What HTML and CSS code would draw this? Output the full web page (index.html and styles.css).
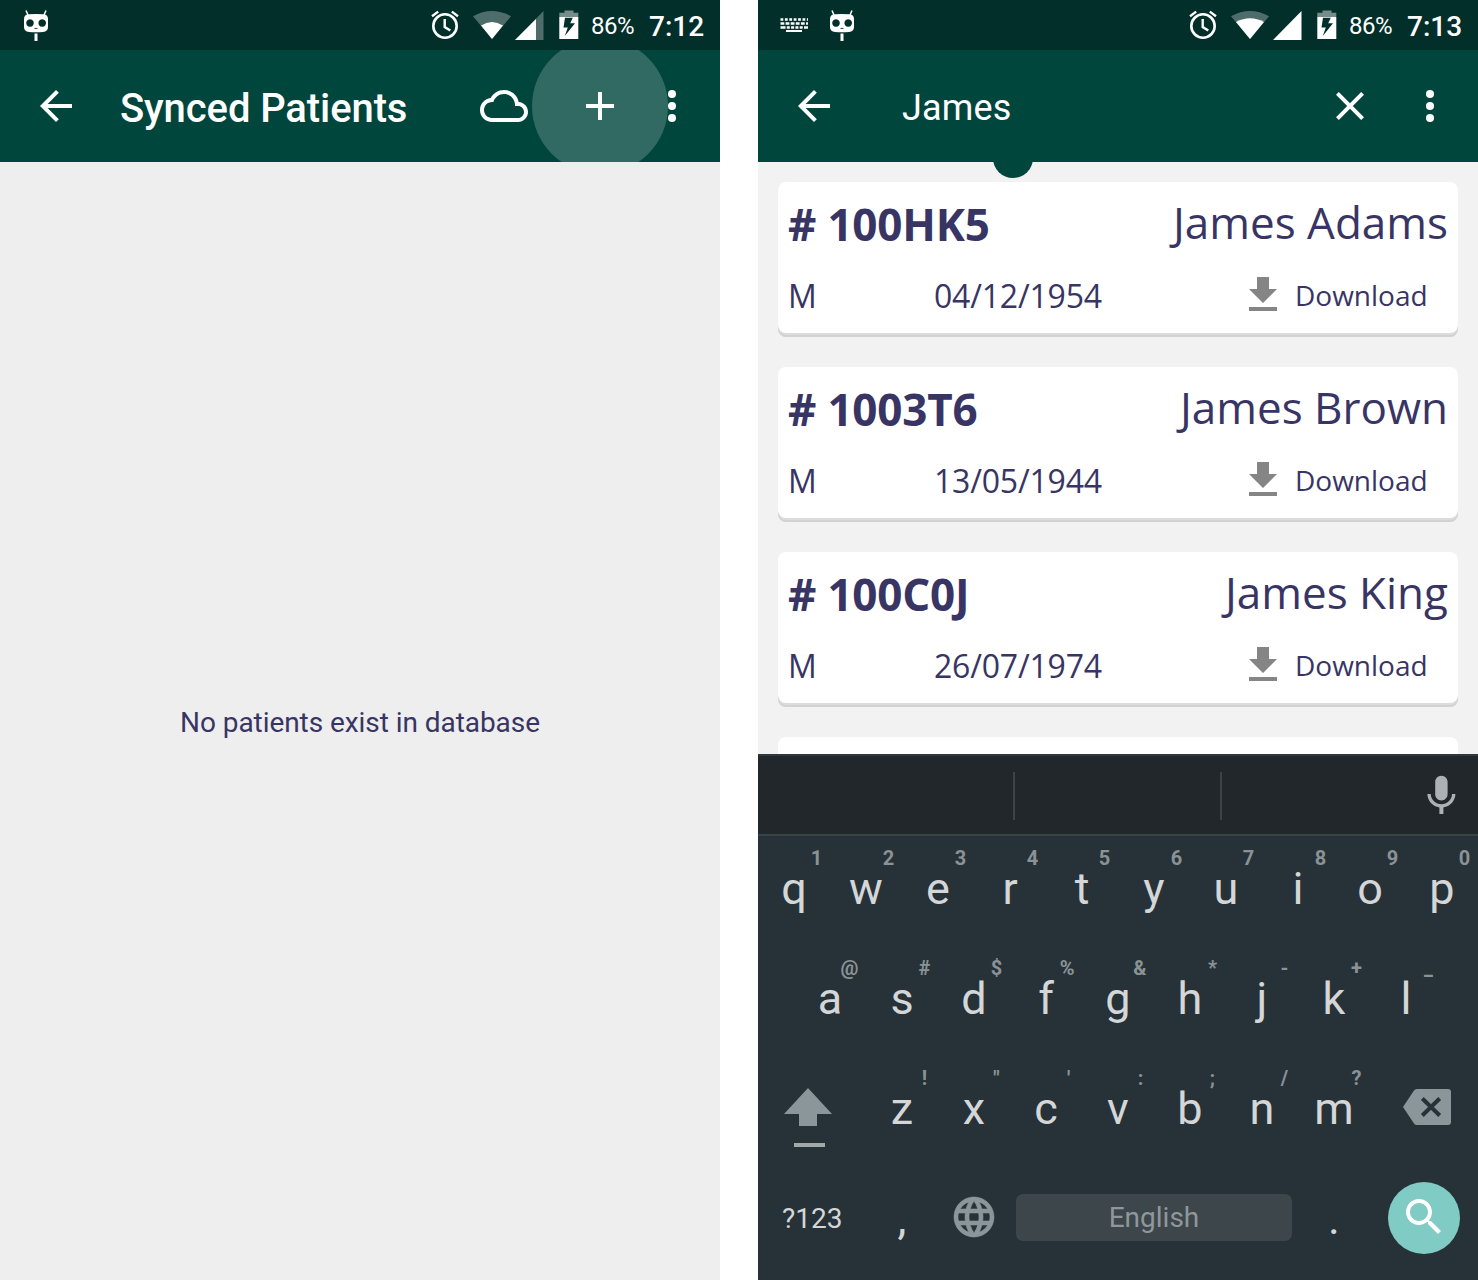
FILE: index.html
```html
<!DOCTYPE html>
<html lang="en">
<head>
<meta charset="utf-8">
<title>Synced Patients</title>
<link rel="stylesheet" href="styles.css">
</head>
<body>
<svg class="sprite" aria-hidden="true">
  <symbol id="cid" viewBox="0 0 26 32">
    <path d="M3 0.500 5 5M23 0.500 21 5" stroke="#fff" stroke-width="1.500" fill="none"/>
    <path fill="#fff" fill-rule="evenodd" d="M6 4.200Q13 3.600 20 4.200Q25 4.400 25 9V17Q25 21.600 20 22Q13 22.600 6 22Q1 21.600 1 17V9Q1 4.400 6 4.200ZM7 9.200a3.800 3.800 0 1 0 .01 0ZM19.200 9.200a3.800 3.800 0 1 0 .01 0ZM11.500 18.200q1.500-.8 3 0v.7q-1.500-.5-3 0Z"/>
    <path fill="#fff" d="M11.500 23.500h3V31h-3z"/>
  </symbol>
  <symbol id="alarm" viewBox="0 0 30 30">
    <circle cx="15" cy="16" r="11.700" fill="none" stroke="#fff" stroke-width="2.600"/>
    <path d="M14.700 9v8l5.600 3.600M2 6.200 8.200 1.600M21.800 1.600 28 6.200" fill="none" stroke="#fff" stroke-width="2.400"/>
  </symbol>
  <symbol id="battery" viewBox="0 0 20 30">
    <path fill="#fff" fill-opacity=".45" d="M5.500 0.500h9v2.300H19.300V7H.3V2.800h5.200z"/>
    <path fill="#fff" fill-rule="evenodd" d="M.3 7H19.300V29H.3ZM6 7.800 4.500 17.500H8.800L5.800 26 16 13.200h-4.800L13.800 7.800Z"/>
  </symbol>
  <symbol id="back" viewBox="0 0 24 24"><path fill="#fff" d="M20 11H7.830l5.590-5.590L12 4l-8 8 8 8 1.410-1.410L7.830 13H20v-2z"/></symbol>
  <symbol id="more" viewBox="0 0 24 24"><g fill="#fff"><circle cx="12" cy="6" r="2"/><circle cx="12" cy="12" r="2"/><circle cx="12" cy="18" r="2"/></g></symbol>
  <symbol id="download" viewBox="0 0 28 34"><path fill="#858585" d="M8 0h12v12h8L14 26 0 12h8zM0 30h28v4H0z"/></symbol>
</svg>

<section class="phone">
  <header class="status">
    <div class="notices"><svg class="cid"><use href="#cid"/></svg></div>
    <svg class="alarm"><use href="#alarm"/></svg>
    <svg class="wifi" viewBox="0 0 38 28"><path fill="#fff" fill-opacity=".3" d="M0 5.200Q19-5.200 38 5.200L19 28Z"/><path fill="#fff" d="M8 14.500Q19 7.500 30 14.500L19 28Z"/></svg>
    <svg class="signal" viewBox="0 0 29 29"><path fill="#fff" fill-opacity=".3" d="M28.500 0V29H0Z"/><path fill="#fff" d="M21 8V29H0Z"/></svg>
    <svg class="battery"><use href="#battery"/></svg>
    <span class="percent">86%</span>
    <span class="clock">7:12</span>
  </header>
  <nav class="appbar">
    <svg class="icon"><use href="#back"/></svg>
    <h1 class="title">Synced Patients</h1>
    <svg class="icon cloud" viewBox="0 0 24 24"><path fill="#fff" d="M19.350 10.040C18.670 6.590 15.640 4 12 4 9.110 4 6.600 5.640 5.350 8.040 2.340 8.360 0 10.910 0 14c0 3.310 2.690 6 6 6h13c2.760 0 5-2.240 5-5 0-2.640-2.050-4.780-4.650-4.960zM19 18H6c-2.210 0-4-1.790-4-4s1.790-4 4-4h.71C7.370 7.690 9.480 6 12 6c3.040 0 5.500 2.460 5.500 5.500v.5H19c1.660 0 3 1.340 3 3s-1.340 3-3 3z"/></svg>
    <span class="ripple"><svg class="icon" viewBox="0 0 24 24"><path fill="#fff" d="M19 13h-6v6h-2v-6H5v-2h6V5h2v6h6v2z"/></svg></span>
    <svg class="icon overflow"><use href="#more"/></svg>
  </nav>
  <main class="empty">No patients exist in database</main>
</section>

<section class="phone">
  <header class="status">
    <div class="notices">
      <svg class="kbd" viewBox="0 0 28 14"><g stroke="#fff" fill="none"><path stroke-width="2.500" stroke-dasharray="2.800 1.600" d="M.5 1.500H28"/><path stroke-width="2.500" stroke-dasharray="3.800 1.300" d="M.5 5.600H28"/><path stroke-width="2.500" stroke-dasharray="5 1.300 3 1.300 3 1.300 3 1.300 3 1.300 6" d="M.5 9.500H28"/><path stroke-width="2" d="M6 13H22"/></g></svg>
      <svg class="cid"><use href="#cid"/></svg>
    </div>
    <svg class="alarm"><use href="#alarm"/></svg>
    <svg class="wifi" viewBox="0 0 38 28"><path fill="#fff" fill-opacity=".3" d="M0 5.200Q19-5.200 38 5.200L19 28Z"/><path fill="#fff" d="M5 11Q19 3.500 33 11L19 28Z"/></svg>
    <svg class="signal" viewBox="0 0 29 29"><path fill="#fff" d="M28.500 0V29H0Z"/></svg>
    <svg class="battery"><use href="#battery"/></svg>
    <span class="percent">86%</span>
    <span class="clock">7:13</span>
  </header>
  <nav class="appbar">
    <svg class="icon"><use href="#back"/></svg>
    <span class="query">James</span>
    <svg class="icon clear" viewBox="0 0 24 24"><path fill="#fff" d="M19 6.410 17.590 5 12 10.590 6.410 5 5 6.410 10.590 12 5 17.590 6.410 19 12 13.410 17.590 19 19 17.590 13.410 12z"/></svg>
    <svg class="icon"><use href="#more"/></svg>
  </nav>
  <main class="results">
    <span class="spinner"></span>
    <article class="card">
      <div class="row"><b class="pid"># 100HK5</b><span class="name">James Adams</span></div>
      <div class="row meta"><span class="sex">M</span><span class="dob">04/12/1954</span><svg class="dl"><use href="#download"/></svg><span class="action">Download</span></div>
    </article>
    <article class="card">
      <div class="row"><b class="pid"># 1003T6</b><span class="name">James Brown</span></div>
      <div class="row meta"><span class="sex">M</span><span class="dob">13/05/1944</span><svg class="dl"><use href="#download"/></svg><span class="action">Download</span></div>
    </article>
    <article class="card">
      <div class="row"><b class="pid"># 100C0J</b><span class="name">James King</span></div>
      <div class="row meta"><span class="sex">M</span><span class="dob">26/07/1974</span><svg class="dl"><use href="#download"/></svg><span class="action">Download</span></div>
    </article>
    <article class="card"></article>
  </main>
  <footer class="keyboard">
    <div class="suggest">
      <i class="slot first"></i><i class="slot"></i>
      <svg class="mic" viewBox="0 0 24 24"><path fill="#abb1b5" d="M12.200 14.200c1.700 0 3.100-1.400 3.100-3.100V5c0-1.700-1.400-3.100-3.100-3.100S9.100 3.300 9.100 5v6.100c0 1.700 1.400 3.100 3.100 3.100zm5.300-3.200c0 3-2.540 5.100-5.300 5.100S6.900 14 6.900 11H5.200c0 3.410 2.720 6.230 6 6.720V21h2v-3.280c3.280-.48 6-3.300 6-6.720h-1.700z"/></svg>
    </div>
    <div class="keys">
      <div class="key"><small>1</small>q</div><div class="key"><small>2</small>w</div><div class="key"><small>3</small>e</div><div class="key"><small>4</small>r</div><div class="key"><small>5</small>t</div><div class="key"><small>6</small>y</div><div class="key"><small>7</small>u</div><div class="key"><small>8</small>i</div><div class="key"><small>9</small>o</div><div class="key"><small>0</small>p</div>
    </div>
    <div class="keys">
      <div class="key"><small>@</small>a</div><div class="key"><small>#</small>s</div><div class="key"><small>$</small>d</div><div class="key"><small>%</small>f</div><div class="key"><small>&amp;</small>g</div><div class="key"><small>*</small>h</div><div class="key"><small>-</small>j</div><div class="key"><small>+</small>k</div><div class="key"><small>_</small>l</div>
    </div>
    <div class="keys">
      <div class="side shift"><svg width="48" height="60" viewBox="0 0 48 60"><path fill="#8b969b" d="M24 0 48 26H33V38H15V26H0z"/><path fill="#a2a9a9" d="M10 55h31v4H10z"/></svg></div>
      <div class="key"><small>!</small>z</div><div class="key"><small>"</small>x</div><div class="key"><small>'</small>c</div><div class="key"><small>:</small>v</div><div class="key"><small>;</small>b</div><div class="key"><small>/</small>n</div><div class="key"><small>?</small>m</div>
      <div class="side erase"><svg width="48" height="36" viewBox="0 0 48 36"><path fill="#8b969b" d="M14 0H45Q48 0 48 3V33Q48 36 45 36H14Q12 36 11 34.500L0 18 11 1.500Q12 0 14 0Z"/><path stroke="#263238" stroke-width="4" d="M19.300 9.500 36.700 26.500M36.700 9.500 19.300 26.500"/></svg></div>
    </div>
    <div class="keys bottom">
      <span class="symbols">?123</span>
      <span class="punct">,</span>
      <svg class="globe" viewBox="0 0 24 24"><path fill="#8b969b" stroke="#8b969b" stroke-width=".3" d="M11.990 2C6.470 2 2 6.480 2 12s4.470 10 9.990 10C17.520 22 22 17.520 22 12S17.520 2 11.990 2zm6.930 6h-2.950c-.32-1.250-.78-2.450-1.380-3.560 1.840.63 3.370 1.910 4.330 3.560zM12 4.040c.83 1.200 1.480 2.530 1.910 3.960h-3.820c.43-1.430 1.080-2.760 1.910-3.960zM4.260 14C4.100 13.360 4 12.690 4 12s.1-1.360.26-2h3.380c-.08.66-.14 1.320-.14 2 0 .68.06 1.340.14 2H4.260zm.82 2h2.950c.32 1.250.78 2.450 1.380 3.560-1.840-.63-3.370-1.900-4.330-3.560zm2.950-8H5.080c.96-1.660 2.490-2.930 4.330-3.560C8.810 5.550 8.350 6.750 8.030 8zM12 19.960c-.83-1.200-1.480-2.530-1.910-3.960h3.820c-.43 1.430-1.080 2.760-1.910 3.960zM14.340 14H9.660c-.09-.66-.16-1.320-.16-2 0-.68.07-1.350.16-2h4.680c.09.65.16 1.320.16 2 0 .68-.07 1.340-.16 2zm.25 5.560c.6-1.110 1.060-2.310 1.380-3.560h2.950c-.96 1.650-2.490 2.930-4.330 3.560zM16.360 14c.08-.66.14-1.320.14-2 0-.68-.06-1.340-.14-2h3.380c.16.640.26 1.310.26 2s-.1 1.360-.26 2h-3.380z"/></svg>
      <span class="space">English</span>
      <span class="punct dot">.</span>
      <span class="go"><svg class="icon" viewBox="0 0 24 24"><path fill="#fff" d="M15.500 14h-.79l-.28-.27C15.410 12.590 16 11.110 16 9.500 16 5.910 13.090 3 9.500 3S3 5.910 3 9.500 5.910 16 9.500 16c1.610 0 3.090-.59 4.230-1.570l.27.28v.79l5 4.990L20.490 19l-4.990-5zm-6 0C7.010 14 5 11.990 5 9.500S7.010 5 9.500 5 14 7.010 14 9.500 11.990 14 9.500 14z"/></svg></span>
    </div>
  </footer>
</section>
</body>
</html>
```
FILE: styles.css
```css
* { box-sizing: border-box; }
body { margin: 0; display: flex; gap: 38px; background: #fff; font-family: Roboto, sans-serif; height: 1280px; overflow: hidden; }
svg { display: block; flex: none; }
.sprite { position: absolute; width: 0; height: 0; }
.phone { width: 720px; height: 1280px; display: flex; flex-direction: column; overflow: hidden; }

/* status bar */
.status { height: 50px; flex: none; background: #022f2a; color: #fff; display: flex; align-items: flex-start; padding: 10px 0 0 22px; }
.notices { display: flex; width: 408px; }
.cid { width: 26px; height: 32px; margin-left: 1px; }
.kbd { width: 28px; height: 14px; margin: 8px 21px 0 0; }
.kbd + .cid { margin-left: 0; }
.alarm { width: 30px; height: 30px; }
.wifi { width: 38px; height: 28px; margin: 1px 0 0 13px; }
.signal { width: 29px; height: 29px; margin: 1px 0 0 4px; }
.battery { width: 20px; height: 30px; margin-left: 15px; }
.percent { width: 58px; margin-left: 12px; font-size: 24px; line-height: 32px; letter-spacing: -.5px; white-space: nowrap; }
.clock { font-size: 28px; line-height: 34px; font-weight: 500; white-space: nowrap; }

/* app bar */
.appbar { height: 112px; flex: none; background: #00463d; color: #fff; display: flex; align-items: center; padding: 0 24px 0 32px; overflow: hidden; }
.icon { width: 48px; height: 48px; position: relative; }
.title { margin: 6px 0 0 40px; width: 360px; font-size: 40px; line-height: 48px; font-weight: 500; letter-spacing: -.1px; white-space: nowrap; }
.ripple { flex: none; width: 136px; height: 136px; margin-left: 4px; margin-right: -20px; border-radius: 50%; background: #316a63; display: flex; align-items: center; justify-content: center; }
.query { flex: 1; margin: 4px 0 0 64px; font-size: 36px; line-height: 44px; letter-spacing: .15px; }
.clear { margin-right: 32px; }

/* contents */
.empty { flex: 1; background: #eee; color: #383564; font-size: 28px; letter-spacing: -.06px; display: flex; align-items: center; justify-content: center; padding-top: 2px; }
.results { position: relative; flex: none; height: 592px; overflow: hidden; background: #f2f2f2; padding: 20px; display: flex; flex-direction: column; gap: 30px; font-family: "Open Sans", "Noto Sans", sans-serif; color: #383564; }
.spinner { position: absolute; left: 235px; top: -24px; width: 40px; height: 40px; border-radius: 50%; background: #00463d; }
.card { flex: none; height: 155px; background: #fff; border-radius: 8px; box-shadow: inset 0 -2px #d2d2d2, inset 0 -4px #dcdcdc; padding: 10px 10px 0; }
.row { display: flex; justify-content: space-between; height: 64px; line-height: 64px; font-size: 44px; white-space: nowrap; }
.pid { letter-spacing: -.22px; }
.name { margin-top: -2px; }
.meta { justify-content: flex-start; align-items: center; height: 48px; line-height: 48px; font-size: 32px; margin-top: 16px; }
.sex { width: 146px; }
.dob { width: 315px; letter-spacing: -.2px; }
.dl { width: 28px; height: 34px; margin-top: -4px; }
.action { margin: -2px 0 0 18px; font-size: 28px; }

/* keyboard */
.keyboard { flex: 1; background: #263238; color: #d4d6d7; }
.suggest { height: 82px; background: #22272b; border-top: 2px solid #2f373b; border-bottom: 2px solid #36454a; display: flex; align-items: flex-start; padding-top: 16px; }
.slot { width: 207px; height: 48px; border-right: 2px solid #3c4347; }
.slot.first { width: 257px; }
.mic { width: 48px; height: 48px; margin-left: 195px; }
.keys { display: flex; justify-content: center; height: 110px; }
.key { width: 72px; text-align: center; font-size: 45px; line-height: 52px; }
.key small { display: block; width: max-content; min-width: 12px; margin: 10px 7.500px -7px auto; font-size: 20px; line-height: 24px; font-weight: 700; color: #8b9296; }
.side { width: 108px; }
.shift { padding: 32px 0 0 26px; }
.erase { padding: 33px 0 0 33px; }
.bottom { justify-content: flex-start; align-items: flex-start; padding: 16px 0 0 24px; }
.symbols { width: 84px; font-size: 28px; line-height: 74px; }
.punct { width: 72px; text-align: center; font-size: 45px; line-height: 73px; }
.globe { width: 48px; height: 48px; margin: 11px 18.500px 0 11.500px; }
.space { width: 276px; height: 47px; margin-top: 12px; border-radius: 7px; background: #3c464b; color: #90979a; font-size: 28px; line-height: 47px; text-align: center; }
.dot { width: 84px; }
.go { width: 72px; height: 72px; margin-left: 12px; border-radius: 50%; background: #80cbc4; padding: 11px 12px; }
```
